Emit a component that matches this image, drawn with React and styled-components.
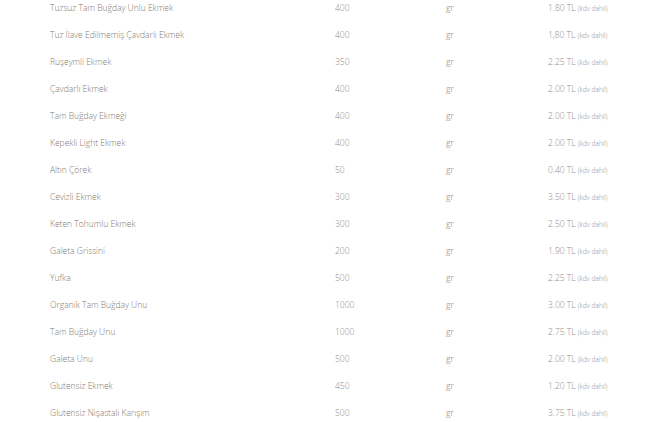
import React from "react";
import styled, { createGlobalStyle } from "styled-components";

const Global = createGlobalStyle`
  html, body { margin: 0; padding: 0; background: #fff; }
  body { font-family: "Open Sans", "Noto Sans", sans-serif; }
`;

const Table = styled.div`
  margin-top: -6px;
  padding-left: 50px;
`;

const Row = styled.div`
  display: grid;
  grid-template-columns: 285px 111px 102px auto;
  height: 27px;
  align-items: center;
  font-size: 8.5px;
  font-weight: 300;
  color: #8f8a85;
`;

const Name = styled.span`
  color: #847a70;
`;

const Qty = styled.span`
  color: #8e8e8e;
`;

const Unit = styled.span`
  color: #847a70;
`;

const Price = styled.span`
  color: #8e8e8e;
`;

const Note = styled.small`
  font-size: 6.6px;
  color: #8e8e8e;
`;

const items = [
  ["Tuzsuz Tam Buğday Unlu Ekmek", "400", "1.80"],
  ["Tuz İlave Edilmemiş Çavdarlı Ekmek", "400", "1,80"],
  ["Ruşeymli Ekmek", "350", "2.25"],
  ["Çavdarlı Ekmek", "400", "2.00"],
  ["Tam Buğday Ekmeği", "400", "2.00"],
  ["Kepekli Light Ekmek", "400", "2.00"],
  ["Altın Çörek", "50", "0.40"],
  ["Cevizli Ekmek", "300", "3.50"],
  ["Keten Tohumlu Ekmek", "300", "2.50"],
  ["Galeta Grissini", "200", "1.90"],
  ["Yufka", "500", "2.25"],
  ["Organik Tam Buğday Unu", "1000", "3.00"],
  ["Tam Buğday Unu", "1000", "2.75"],
  ["Galeta Unu", "500", "2.00"],
  ["Glutensiz Ekmek", "450", "1.20"],
  ["Glutensiz Nişastalı Karışım", "500", "3.75"],
];

export default function App() {
  return (
    <>
      <Global />
      <Table>
        {items.map(([n, q, p]) => (
          <Row key={n}>
            <Name>{n}</Name>
            <Qty>{q}</Qty>
            <Unit>gr</Unit>
            <Price>
              {p} TL <Note>(kdv dahil)</Note>
            </Price>
          </Row>
        ))}
      </Table>
    </>
  );
}
